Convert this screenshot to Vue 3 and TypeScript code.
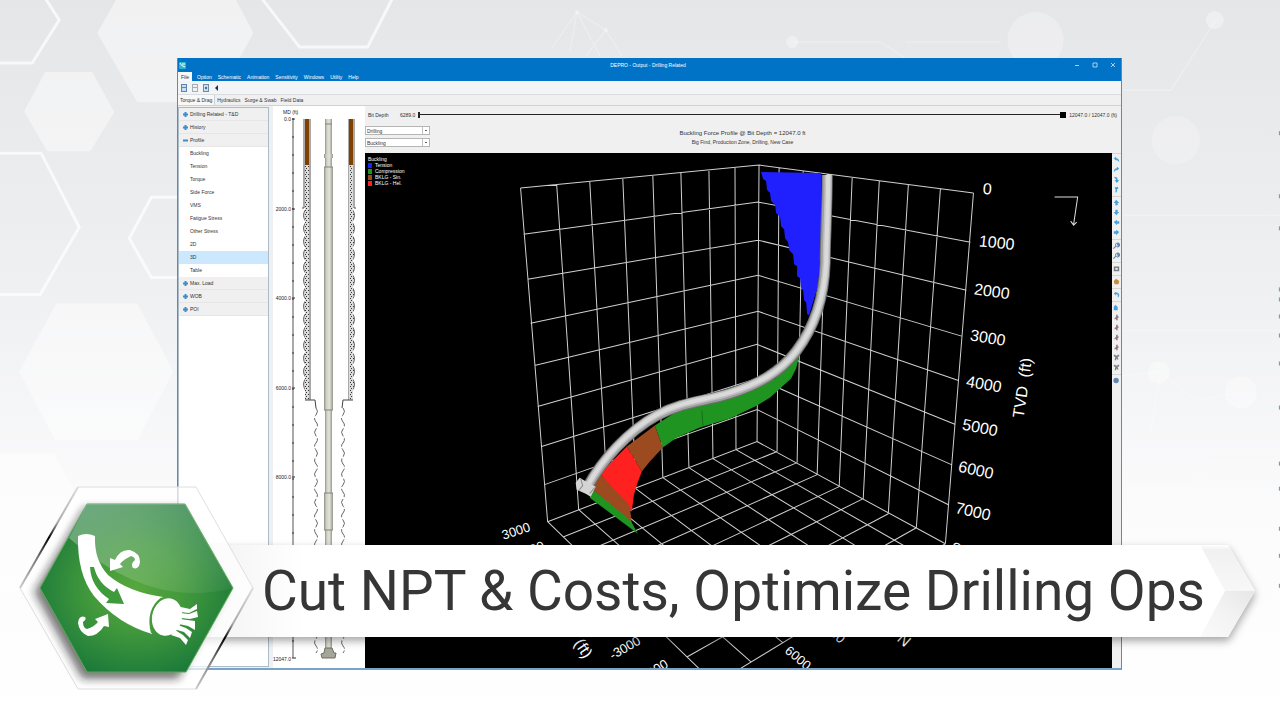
<script setup lang="ts">
import { ref } from 'vue'

type Point = [number, number]

const menus = ['File', 'Option', 'Schematic', 'Animation', 'Sensitivity', 'Windows', 'Utility', 'Help']
const tabs = ['Torque & Drag', 'Hydraulics', 'Surge & Swab', 'Field Data']

interface TreeItem {
  label: string
  kind: 'closed' | 'open' | 'leaf'
}

const tree: TreeItem[] = [
  { label: 'Drilling Related - T&D', kind: 'closed' },
  { label: 'History', kind: 'closed' },
  { label: 'Profile', kind: 'open' },
  { label: 'Buckling', kind: 'leaf' },
  { label: 'Tension', kind: 'leaf' },
  { label: 'Torque', kind: 'leaf' },
  { label: 'Side Force', kind: 'leaf' },
  { label: 'VMS', kind: 'leaf' },
  { label: 'Fatigue Stress', kind: 'leaf' },
  { label: 'Other Stress', kind: 'leaf' },
  { label: '2D', kind: 'leaf' },
  { label: '3D', kind: 'leaf' },
  { label: 'Table', kind: 'leaf' },
  { label: 'Max. Load', kind: 'closed' },
  { label: 'WOB', kind: 'closed' },
  { label: 'POI', kind: 'closed' },
]

const selected = ref('3D')
const operation = ref('Drilling')
const quantity = ref('Buckling')

const legend = [
  { label: 'Tension', tone: 'blue' },
  { label: 'Compression', tone: 'green' },
  { label: 'BKLG - Sin.', tone: 'brown' },
  { label: 'BKLG - Hel.', tone: 'red' },
]

// Well schematic
const depthLabels = [
  { y: 119, text: '0.0' },
  { y: 209, text: '2000.0' },
  { y: 298, text: '4000.0' },
  { y: 388, text: '6000.0' },
  { y: 477, text: '8000.0' },
  { y: 659, text: '12047.0' },
]
const depthTicks = Array.from({ length: 30 }, (_, i) => 119 + i * 18)

function wave(x: number, from: number, to: number, swing: number): string {
  let d = `M${x} ${from}`
  let side = 1
  for (let y = from; y + 7 <= to; y += 7) {
    d += `q${swing * side} 3 0 7`
    side = -side
  }
  return d
}

function scallops(x: number, from: number, to: number, swing: number): string {
  let d = `M${x} ${from}`
  for (let y = from; y + 13 <= to; y += 13) d += `q${swing} 6 0 13`
  return d
}

// Grid of the 3D view
const leftTop: Point[] = [[521, 188], [557, 184], [590, 181], [623, 178], [653, 176], [681, 173], [709, 171], [735, 168], [759, 165]]
const leftBottom: Point[] = [[548, 521], [579, 509], [608, 499], [636, 488], [663, 477], [689, 467], [713, 458], [736, 449], [757, 441]]
const rightTop: Point[] = [[779, 168], [803, 171], [827, 174], [852, 177], [879, 181], [908, 185], [940, 189], [973, 193]]
const rightBottom: Point[] = [[777, 451], [797, 462], [817, 474], [839, 486], [863, 498], [888, 513], [916, 527], [945, 543]]
const leftEdge: Point[] = [[521, 188], [524, 234], [528, 279], [531, 323], [535, 365], [538, 406], [542, 446], [545, 484], [548, 521]]
const corner: Point[] = [[759, 165], [758, 202], [758, 240], [758, 275], [758, 311], [757, 344], [757, 378], [757, 409], [757, 441]]
const rightEdge: Point[] = [[973, 193], [970, 242], [966, 290], [962, 336], [958, 380], [955, 424], [951, 464], [948, 504], [945, 543]]
const vanishLeft: Point = [94, 80]
const vanishRight: Point = [1715, 75]

function cross(a: Point, b: Point, c: Point, d: Point): Point {
  const r: Point = [b[0] - a[0], b[1] - a[1]]
  const s: Point = [d[0] - c[0], d[1] - c[1]]
  const t = ((c[0] - a[0]) * s[1] - (c[1] - a[1]) * s[0]) / (r[0] * s[1] - r[1] * s[0])
  return [Math.round(a[0] + r[0] * t), Math.round(a[1] + r[1] * t)]
}

function line(...pts: Point[]): string {
  return 'M' + pts.map((p) => p.join(' ')).join('L')
}

const near: Point = rightBottom[7]
const west: Point = leftBottom[0]
const gridPath = [
  ...leftTop.map((p, i) => line(p, leftBottom[i])),
  ...rightTop.map((p, i) => line(p, rightBottom[i])),
  ...leftEdge.map((p, i) => line(p, corner[i], rightEdge[i])),
  ...leftBottom.map((p) => line(p, cross(vanishLeft, p, near, vanishRight))),
  ...rightBottom.map((p) => line(p, cross(vanishRight, p, west, vanishLeft))),
].join('')

const axisLabels = [
  { x: 982, y: 194, r: 4, text: '0' },
  { x: 978, y: 246, r: 6, text: '1000' },
  { x: 973, y: 294, r: 8, text: '2000' },
  { x: 969, y: 340, r: 9, text: '3000' },
  { x: 965, y: 386, r: 10, text: '4000' },
  { x: 961, y: 429, r: 11, text: '5000' },
  { x: 957, y: 471, r: 12, text: '6000' },
  { x: 954, y: 512, r: 13, text: '7000' },
  { x: 950, y: 552, r: 14, text: '8000' },
]
const floorLabels = [
  { x: 504, y: 539, r: -18, text: '3000' },
  { x: 519, y: 559, r: -22, text: '2000' },
  { x: 613, y: 659, r: -30, text: '-3000' },
  { x: 641, y: 683, r: -32, text: '-4000' },
  { x: 784, y: 651, r: 40, text: '6000' },
  { x: 819, y: 623, r: 44, text: '5000' },
]

const tubePath = 'M827 175C827 210 825 240 825 262C824 300 812 330 796 351C780 372 758 384 730 393C705 401 683 401 657 415C628 431 602 460 588 486'
const tubeLight = 'M828 175C828 210 826 240 826 262C824 300 812 330 796 351C780 372 758 383 730 392C705 400 683 400 657 414C628 430 602 459 588 485'

const iconGroups: string[][] = [
  ['turnL', 'turnR', 'loopD', 'loopU'],
  ['up', 'down', 'left', 'right'],
  ['zoom', 'zoom'],
  ['camera'],
  ['palette'],
  ['undo'],
  ['home', 'axis', 'axis', 'axis', 'axis', 'frame', 'frame'],
  ['globe'],
]
const iconPaths: Record<string, string> = {
  turnL: 'M1 3L4 1V3Q8 3 8 8Q6 5 4 5V6Z',
  turnR: 'M8 3L5 1V3Q1 3 1 8Q3 5 5 5V6Z',
  loopD: 'M2 1Q6 1 6 5H8L5 9L2 5H4Q4 3 2 3Z',
  loopU: 'M2 2L6 1L7 4L5 4Q6 6 4 9L3 7Q4 5 3 4Z',
  up: 'M4 1L8 5H6V8H3V5H1Z',
  down: 'M4 8L8 4H6V1H3V4H1Z',
  left: 'M1 4L5 1V3H8V6H5V8Z',
  right: 'M8 4L4 1V3H1V6H4V8Z',
  zoom: 'M5 1A3 3 0 1 1 4 6L1 9L0 8L3 5A3 3 0 0 1 5 1ZM5 2A1 2 0 1 0 6 5Z',
  camera: 'M1 2H8V8H1ZM3 4V6H6V4Z',
  palette: 'M4 1L8 4L7 8H2L1 4Z',
  undo: 'M1 3L4 1V2Q8 2 8 6L7 8L6 8Q7 4 4 4V6Z',
  home: 'M3 1L6 4V8H1V4Z',
  axis: 'M4 1H6V3L8 4L6 5V8H4V6L2 7V5L4 4Z',
  frame: 'M1 1H3V2H6V1H8V3L6 4L7 7H5V6H4V8H2L3 4L1 3Z',
  globe: 'M4 1A3 3 0 1 1 4 8A3 3 0 1 1 4 1Z',
}

const edgeDots = [133, 196, 228, 289, 299, 316, 335, 363, 407, 463, 488, 528, 555, 585]
</script>

<template>
  <main class="stage">
    <svg class="backdrop" viewBox="0 0 1280 720" preserveAspectRatio="xMidYMid slice" aria-hidden="true">
      <defs>
        <linearGradient id="sky" x1="0" y1="0" x2="0" y2="1">
          <stop offset="0" stop-color="#e5e6e8" />
          <stop offset=".4" stop-color="#eff0f2" />
          <stop offset=".7" stop-color="#fbfbfc" />
          <stop offset="1" stop-color="#ffffff" />
        </linearGradient>
      </defs>
      <rect width="1280" height="720" fill="url(#sky)" />
      <g fill="#fff" fill-opacity=".45">
        <path d="M98 33L128-20H226L254 33L216 102H138Z" />
        <path d="M25 111L46 72H93L115 112L91 151H48Z" />
        <path d="M20 371L57 303H138L174 371L138 440H56Z" />
        <path d="M0 452H55L90 520L55 590H0Z" />
        <circle cx="1035" cy="40" r="28" opacity=".6" />
        <circle cx="1175" cy="140" r="24" opacity=".5" />
      </g>
      <g fill="none" stroke="#fff" stroke-opacity=".7" stroke-width="3">
        <path d="M46-2L60 20L33 63H-2M-2 153H42L80 227L41 294H-2M262-2L300 47H368L393-2M180 197H152L130 238L152 277H180" />
      </g>
      <g fill="none" stroke="#fff" stroke-opacity=".35">
        <path d="M552 48L577 12L606 30L622 56M577 12L570 52M577 12L600 56M606 30L586 56M790 42H880L905 58M905 42H1000M1122 90H1170L1215 20M1122 215H1280M1122 330H1280M1122 375L1160 372L1195 400L1240 392M1160 372L1150 430M1122 485H1190L1210 462H1280" />
      </g>
      <g fill="#fff" fill-opacity=".35">
        <circle cx="577" cy="12" r="2" /><circle cx="606" cy="30" r="2" />
        <circle cx="792" cy="42" r="6" /><circle cx="1214" cy="20" r="9" />
        <circle cx="1158" cy="372" r="11" /><circle cx="1240" cy="392" r="16" />
      </g>
      <rect v-for="y in edgeDots" :key="y" x="1278" :y="y - 2" width="2" height="4" fill="#4fb0c0" />
    </svg>

    <section class="window">
      <header class="titlebar">
        <svg class="app-icon" viewBox="0 0 7 7" aria-hidden="true">
          <rect width="7" height="7" rx="1" fill="#2cb5c8" />
          <path d="M1 1Q2 4 6 5M3 2L6 2" stroke="#fff" fill="none" />
        </svg>
        <h1 class="title">DEPRO - Output - Drilling Related</h1>
        <div class="caption">
          <button type="button" aria-label="Minimize"><svg viewBox="0 0 6 6"><path d="M1 3.5H5" /></svg></button>
          <button type="button" aria-label="Maximize"><svg viewBox="0 0 6 6"><path d="M1 1H5V5H1Z" /></svg></button>
          <button type="button" aria-label="Close"><svg viewBox="0 0 6 6"><path d="M1 1L5 5M5 1L1 5" /></svg></button>
        </div>
      </header>

      <nav class="menu">
        <button v-for="(m, i) in menus" :key="m" type="button" :class="{ active: i === 0 }">{{ m }}</button>
      </nav>

      <div class="toolbar">
        <button type="button" aria-label="Report"><svg viewBox="0 0 6 8"><path d="M0 0H6V8H0Z" fill="#5b86b4" /><path d="M1 1H5V3H1ZM1 4H5V7H1Z" fill="#c9ddef" /></svg></button>
        <button type="button" aria-label="Print"><svg viewBox="0 0 6 8"><path d="M0 0H6V8H0Z" fill="#a5adb6" /><path d="M1 1H5V3H1ZM1 4H5V7H1Z" fill="#eef2f5" /></svg></button>
        <button type="button" aria-label="Export"><svg viewBox="0 0 6 8"><path d="M0 0H6V8H0Z" fill="#6d8ba8" /><path d="M1 1H5V7H1Z" fill="#c9ddef" /><path d="M2 3H4V5H2Z" fill="#44729c" /></svg></button>
        <button type="button" aria-label="Back"><svg viewBox="0 0 6 8"><path d="M1 4L4 1V7Z" fill="#12305c" /></svg></button>
      </div>

      <div class="tabs">
        <button v-for="(t, i) in tabs" :key="t" type="button" :class="{ active: i === 0 }">{{ t }}</button>
      </div>

      <div class="body">
        <nav class="tree">
          <button
            v-for="item in tree"
            :key="item.label"
            type="button"
            :class="[item.kind, { selected: item.label === selected }]"
            @click="selected = item.label"
          >
            <svg v-if="item.kind !== 'leaf'" viewBox="0 0 5 5" aria-hidden="true">
              <path d="M0 1.5H5V3.5H0Z" />
              <path v-if="item.kind === 'closed'" d="M1.5 0H3.5V5H1.5Z" />
            </svg>
            <span>{{ item.label }}</span>
          </button>
        </nav>

        <div class="schematic">
          <svg viewBox="273 106 92 562" preserveAspectRatio="xMidYMin meet">
            <defs>
              <pattern id="cement" width="3" height="4" patternUnits="userSpaceOnUse">
                <rect width="3" height="4" fill="#dcdcdc" />
                <path d="M0 0H1V1H0ZM2 2H3V3H2Z" fill="#333" />
              </pattern>
              <linearGradient id="steel">
                <stop offset="0" stop-color="#8f9086" />
                <stop offset=".25" stop-color="#cfd0c4" />
                <stop offset=".6" stop-color="#e2e3da" />
                <stop offset="1" stop-color="#999a8f" />
              </linearGradient>
            </defs>
            <text class="depth" x="283" y="114">MD (ft)</text>
            <text v-for="d in depthLabels" :key="d.y" class="depth" text-anchor="end" x="291" :y="d.y + 2">{{ d.text }}</text>
            <path d="M293 119V658" stroke="#555" />
            <path v-for="y in depthTicks" :key="y" :d="`M292 ${y}H294`" stroke="#333" />
            <path d="M292 119H295M292 209H295M292 298H295M292 388H295M292 477H295M292 658H296" stroke="#333" />

            <path :d="scallops(306, 209, 400, -5)" fill="url(#cement)" stroke="#666" />
            <path :d="scallops(352, 209, 400, 5)" fill="url(#cement)" stroke="#666" />
            <rect x="305" y="119" width="6" height="281" fill="#a9a9a9" />
            <rect x="305" y="119" width="4" height="46" fill="#804000" />
            <rect x="305" y="165" width="4" height="235" fill="url(#cement)" />
            <rect x="348" y="119" width="5" height="281" fill="#a9a9a9" />
            <rect x="349" y="119" width="4" height="46" fill="#804000" />
            <rect x="349" y="165" width="4" height="235" fill="url(#cement)" />
            <path d="M304 119V208H302M354 119V208H356" fill="none" stroke="#555" />
            <path d="M305 400H315L316 408M353 400H343L342 408" fill="none" stroke="#444" />
            <path :d="wave(316, 408, 658, 3)" fill="none" stroke="#666" stroke-dasharray="9 2" />
            <path :d="wave(343, 408, 658, 3)" fill="none" stroke="#666" stroke-dasharray="9 2" />

            <rect x="325" y="119" width="7" height="532" fill="url(#steel)" />
            <rect x="324" y="154" width="9" height="4" fill="url(#steel)" />
            <rect x="324" y="167" width="9" height="243" fill="url(#steel)" />
            <rect x="324" y="493" width="9" height="37" fill="url(#steel)" />
            <path d="M325 124H332M324 167H333M324 410H333M324 493H333M324 530H333" stroke="#85867b" />
            <path d="M325 648H332L334 653H336L335 658H322L321 654L324 653Z" fill="#a5a697" stroke="#6d6e62" />
          </svg>
        </div>

        <div class="view">
          <div class="depth-row">
            <label for="bit">Bit Depth</label>
            <output>6289.0</output>
            <input id="bit" type="range" min="6289" max="12047" value="12047" />
            <output>12047.0 / 12047.0 (ft)</output>
          </div>
          <div class="controls">
            <div class="selects">
              <select v-model="operation" aria-label="Operation">
                <option>Drilling</option>
                <option>Tripping</option>
              </select>
              <select v-model="quantity" aria-label="Quantity">
                <option>Buckling</option>
                <option>Tension</option>
              </select>
            </div>
            <div class="heading">
              <h2>Buckling Force Profile @ Bit Depth = 12047.0 ft</h2>
              <p>Big Find, Production Zone, Drilling, New Case</p>
            </div>
          </div>

          <div class="plot-row">
            <div class="plot">
              <svg class="scene" viewBox="365 153 747 514" preserveAspectRatio="xMidYMid slice">
                <path :d="gridPath" fill="none" stroke="#d0d0d0" />
                <path
                  d="M761 172L821 173L821 240L818 285L809 315L807 314L806 302L804 300L803 290L801 288L800 278L797 276L797 266L794 264L793 254L789 250L788 242L785 238L784 229L781 226L780 217L776 213L775 205L771 201L770 193L767 190L766 181L763 179Z"
                  fill="#2020ff"
                />
                <path d="M800 352L796 368L791 378L780 388L770 397L757 405L730 418L700 427L677 437L663 447L655 425L680 409L730 397L775 378Z" fill="#209420" />
                <path d="M655 425L663 447L650 461L642 471L627 446Z" fill="#9c4a20" />
                <path d="M627 446L642 471L637 484L634 495L632 511L600 473Z" fill="#ff2020" />
                <path d="M600 473L630 505L632 524L592 488Z" fill="#9c4a20" />
                <path d="M592 488L631 520L638 533L590 497Z" fill="#209420" />
                <path d="M702 410L703 426" stroke="#187018" />
                <g fill="none">
                  <path :d="tubePath" stroke="#6e6e6e" stroke-width="11" />
                  <path :d="tubePath" stroke="#a0a0a0" stroke-width="9" />
                  <path :d="tubeLight" stroke="#c2c2c2" stroke-width="7" />
                  <path :d="tubeLight" stroke="#dadada" stroke-width="4" />
                </g>
                <path d="M576 482L580 477L585 480L596 486L594 490L591 496L586 493L577 489Z" fill="#d4d4d4" />
                <path d="M581 478L583 485L579 490M595 487L590 493" stroke="#8c8c8c" fill="none" />
                <path d="M1054 197H1077L1073 224M1070 221L1073 225L1076 222" fill="none" stroke="#ddd" />
                <text
                  v-for="l in axisLabels"
                  :key="l.text"
                  class="axis"
                  :transform="`translate(${l.x} ${l.y}) rotate(${l.r})`"
                >{{ l.text }}</text>
                <text
                  v-for="l in floorLabels"
                  :key="l.text"
                  class="floor"
                  :transform="`translate(${l.x} ${l.y}) rotate(${l.r})`"
                >{{ l.text }}</text>
                <text class="name" transform="translate(1023 418) rotate(-82)">TVD&nbsp; (ft)</text>
                <text class="name" transform="translate(560 622) rotate(56)">W- (ft)</text>
                <text class="name" transform="translate(896 639) rotate(42)">N</text>
              </svg>
              <div class="legend">
                <p>Buckling</p>
                <ul>
                  <li v-for="l in legend" :key="l.label"><i :class="l.tone"></i>{{ l.label }}</li>
                </ul>
              </div>
            </div>
            <div class="tools">
              <div v-for="(g, gi) in iconGroups" :key="gi" class="group">
                <button v-for="(k, ki) in g" :key="ki" type="button" :class="k" :aria-label="k">
                  <svg viewBox="0 0 9 9"><path :d="iconPaths[k]" /></svg>
                </button>
              </div>
            </div>
          </div>
        </div>
      </div>
    </section>

    <section class="banner">
      <p class="slogan">Cut NPT &amp; Costs, Optimize Drilling Ops</p>
      <svg class="arrow" viewBox="0 0 60 92" aria-hidden="true">
        <defs>
          <linearGradient id="foldTop" x1="0" y1="0" x2="0" y2="1">
            <stop offset="0" stop-color="#ffffff" /><stop offset=".1" stop-color="#f1f1f1" /><stop offset="1" stop-color="#f7f7f7" />
          </linearGradient>
          <linearGradient id="foldLow" x1="1" y1="0" x2="0" y2="1">
            <stop offset="0" stop-color="#e6e6e6" /><stop offset=".5" stop-color="#f3f3f3" /><stop offset="1" stop-color="#fafafa" />
          </linearGradient>
        </defs>
        <path d="M0 0H33L60 46L33 92H0Z" fill="#fff" />
        <path d="M5 0H33L60 46H30Z" fill="url(#foldTop)" />
        <path d="M30 46H60L33 92H5Z" fill="url(#foldLow)" />
      </svg>
    </section>

    <svg class="emblem" viewBox="0 480 270 220" aria-hidden="true">
      <defs>
        <radialGradient id="leaf" cx=".5" cy=".5" r=".6">
          <stop offset="0" stop-color="#56a73c" />
          <stop offset=".4" stop-color="#439a3c" />
          <stop offset="1" stop-color="#15753a" />
        </radialGradient>
        <linearGradient id="rim" x1="0" y1="0" x2="0" y2="1">
          <stop offset="0" stop-color="#ddd" />
          <stop offset=".35" stop-color="#aaa" />
          <stop offset=".5" stop-color="#000" />
          <stop offset=".7" stop-color="#777" />
          <stop offset="1" stop-color="#ccc" />
        </linearGradient>
        <linearGradient id="gloss" x1="0" y1="0" x2="1" y2="1">
          <stop offset="0" stop-color="#c8dccd" stop-opacity=".5" />
          <stop offset="1" stop-color="#c8dccd" stop-opacity=".05" />
        </linearGradient>
        <filter id="soft" x="-20%" y="-20%" width="140%" height="140%"><feGaussianBlur stdDeviation="4" /></filter>
      </defs>
      <path d="M78 487H196L253 588L196 689H78L20 588Z" fill="#fff" fill-opacity=".7" stroke="#dedede" />
      <path d="M34 592L84 508H180L226 590L178 679H82Z" fill="#222" fill-opacity=".6" filter="url(#soft)" />
      <path d="M20 588L78 487" stroke="url(#rim)" stroke-width="2" />
      <path d="M253 588L196 689" stroke="url(#rim)" stroke-width="2" />
      <path d="M87 504H185L233 588L186 672H87L40 588Z" fill="url(#leaf)" stroke="#5da957" />
      <path d="M87 504H185L233 588Q150 610 69 538Z" fill="url(#gloss)" />
      <g fill="#fff">
        <path d="M78 536Q86 532 95 536Q94 560 108 575Q128 592 163 597Q147 608 152 634Q118 624 94 596Q77 574 78 536Z" />
        <ellipse cx="167" cy="617" rx="15" ry="19" transform="rotate(12 167 617)" />
        <path d="M176 606L190 609L197 604V609L189 613L180 612ZM180 613L189 614L197 611L198 617L190 619L181 618ZM180 619L195 621L195 630L188 626L179 624ZM178 625L186 628L192 632L190 638L184 632L177 630ZM175 630L183 635L188 640L186 645L180 638L171 635Z" />
        <path d="M110 571L110 558L115 560Q120 549 130 550Q140 553 140 562Q139 570 133 568Q130 564 135 560Q135 557 131 556Q124 559 120 564L123 567Z" />
        <path d="M108 614L109 627L104 626Q98 636 88 636Q79 632 78 623Q79 615 85 617Q87 619 83 622Q83 628 87 629Q94 627 98 622L95 619Z" />
      </g>
      <path d="M90 567H94Q98 584 114 592L117 588L124 604L106 603L109 599Q91 587 90 567Z" fill="#3f9a3c" />
      <path d="M162 598Q146 610 152 633" fill="none" stroke="#48993c" stroke-width="2" />
    </svg>
  </main>
</template>

<style>
html,
body {
  margin: 0;
}
</style>

<style scoped>
* {
  box-sizing: border-box;
}
.stage {
  position: relative;
  min-height: 100vh;
  display: flex;
  padding: 58px 158px 51px 177px;
  overflow: hidden;
  font-family: 'Liberation Sans', sans-serif;
  font-size: 5px;
  line-height: 6px;
  color: #333;
}
.backdrop {
  position: absolute;
  inset: 0;
  width: 100%;
  height: 100%;
}
button {
  border: 0;
  padding: 0;
  margin: 0;
  background: none;
  font: inherit;
  color: inherit;
}
h1,
h2,
p,
ul {
  margin: 0;
  padding: 0;
  font-weight: 400;
  list-style: none;
}
svg {
  display: block;
}
.window {
  position: relative;
  flex: 1;
  min-width: 0;
  display: flex;
  flex-direction: column;
  background: #f0f0f0;
  border: 1px solid #4f8fc6;
  border-top: 0;
  border-bottom: 2px solid #7ba3c8;
}
.titlebar {
  display: flex;
  align-items: center;
  height: 14px;
  background: #0173c7;
  color: #fff;
}
.app-icon {
  width: 7px;
  height: 7px;
  margin-left: 1px;
}
.title {
  flex: 1;
  padding-left: 36px;
  text-align: center;
  font-size: 5px;
}
.caption {
  display: flex;
  gap: 12px;
  margin-right: 5px;
}
.caption svg {
  width: 6px;
  height: 6px;
  fill: none;
  stroke: #a9d0ef;
}
.menu {
  display: flex;
  height: 9px;
  background: #0173c7;
  color: #fff;
  gap: 6px;
}
.menu .active {
  width: 14px;
  margin-right: -1px;
  background: #f5f6f7;
  color: #333;
}
.toolbar {
  display: flex;
  align-items: center;
  gap: 5px;
  height: 14px;
  padding-left: 3px;
  background: #f3f4f5;
  border-bottom: 1px solid #d9dde0;
}
.toolbar svg {
  width: 6px;
  height: 8px;
}
.tabs {
  display: flex;
  height: 11px;
  border-bottom: 1px solid #cfd2d4;
}
.tabs button {
  padding: 0 2px;
}
.tabs .active {
  background: #f8f8f8;
  border-right: 1px solid #cfd2d4;
}
.body {
  flex: 1;
  display: flex;
  min-height: 0;
}
.tree {
  width: 91px;
  margin: 1px 4px 1px 0;
  background: #fff;
  border: 1px solid #a8bccb;
  display: flex;
  flex-direction: column;
}
.tree button {
  display: flex;
  align-items: center;
  height: 13px;
  padding-left: 11px;
  text-align: left;
  border-bottom: 1px solid transparent;
}
.tree .closed,
.tree .open {
  background: #f0f0f0;
  padding-left: 4px;
  gap: 2px;
  border-bottom-color: #e6e6e6;
}
.tree .selected {
  background: #cce8ff;
}
.tree svg {
  width: 5px;
  height: 5px;
  fill: #3d8dcc;
}
.schematic {
  width: 92px;
  background: #fff;
}
.schematic svg {
  width: 100%;
}
.depth {
  font-size: 5px;
  fill: #222;
}
.view {
  flex: 1;
  min-width: 0;
  display: flex;
  flex-direction: column;
}
.depth-row {
  display: flex;
  align-items: center;
  height: 17px;
  padding: 0 4px 0 3px;
}
.depth-row label {
  width: 32px;
}
.depth-row input {
  flex: 1;
  min-width: 0;
  height: 6px;
  margin: 0 3px 0 3px;
  appearance: none;
  background: linear-gradient(#222, #222) center / 100% 1px no-repeat;
  border-left: 2px solid #222;
}
.depth-row input::-webkit-slider-thumb {
  appearance: none;
  width: 6px;
  height: 6px;
  background: #000;
}
.controls {
  display: flex;
  height: 30px;
}
.selects {
  display: flex;
  flex-direction: column;
  gap: 3px;
  padding-top: 3px;
}
.selects select {
  width: 65px;
  height: 9px;
  padding: 0 0 0 1px;
  font: inherit;
  color: #333;
  appearance: none;
  border: 1px solid #b5b5b5;
  border-radius: 0;
  background:
    linear-gradient(#666, #666) right 2px center / 2px 1px no-repeat,
    linear-gradient(#c0c0c0, #c0c0c0) right 6px center / 1px 100% no-repeat,
    #fff;
}
.heading {
  flex: 1;
  padding: 5px 66px 0 0;
  text-align: center;
}
.heading h2 {
  font-size: 6px;
  line-height: 10px;
}
.heading p {
  font-size: 5px;
  line-height: 9px;
}
.plot-row {
  flex: 1;
  display: flex;
  min-height: 0;
}
.plot {
  position: relative;
  flex: 1;
  min-width: 0;
  min-height: 514px;
  background: #000;
}
.scene {
  position: absolute;
  inset: 0;
  width: 100%;
  height: 100%;
}
.axis {
  font-size: 16px;
  fill: #fff;
}
.floor {
  font-size: 13px;
  fill: #fff;
}
.name {
  font-size: 16px;
  fill: #fff;
}
.legend {
  position: absolute;
  left: 3px;
  top: 3px;
  color: #fff;
}
.legend li {
  display: flex;
  align-items: center;
  gap: 3px;
}
.legend i {
  width: 4px;
  height: 5px;
}
.blue {
  background: #2020ff;
}
.green {
  background: #209420;
}
.brown {
  background: #9c4a20;
}
.red {
  background: #ff2020;
}
.tools {
  width: 9px;
  display: flex;
  flex-direction: column;
  gap: 2px;
}
.group {
  display: flex;
  flex-direction: column;
  border-top: 1px solid #d5d5d5;
}
.group button {
  height: 10px;
}
.group svg {
  width: 7px;
  height: 9px;
  margin: 0 auto;
  fill: #4a9fd8;
}
.group .zoom svg,
.group .globe svg {
  fill: #6286ae;
}
.group .camera svg,
.group .frame svg {
  fill: #7b7f86;
}
.group .palette svg {
  fill: #c88a3a;
}
.group .axis svg {
  fill: #8d7480;
}
.banner {
  position: absolute;
  left: 204px;
  right: 25px;
  top: 545px;
  height: 92px;
  display: flex;
  align-items: center;
  filter: drop-shadow(0 4px 4px rgba(0, 0, 0, 0.35));
}
.slogan {
  position: relative;
  z-index: 1;
  flex: 1;
  min-width: 0;
  align-self: stretch;
  padding-left: 58px;
  background: linear-gradient(90deg, #f2f2f2, #fff 100px);
  font-family: Roboto, 'Liberation Sans', sans-serif;
  font-size: 55px;
  line-height: 92px;
  white-space: nowrap;
  color: #363636;
}
.arrow {
  flex: none;
  width: 60px;
  height: 92px;
}
.emblem {
  position: absolute;
  left: 0;
  top: 480px;
  width: 270px;
  height: 220px;
}
</style>
